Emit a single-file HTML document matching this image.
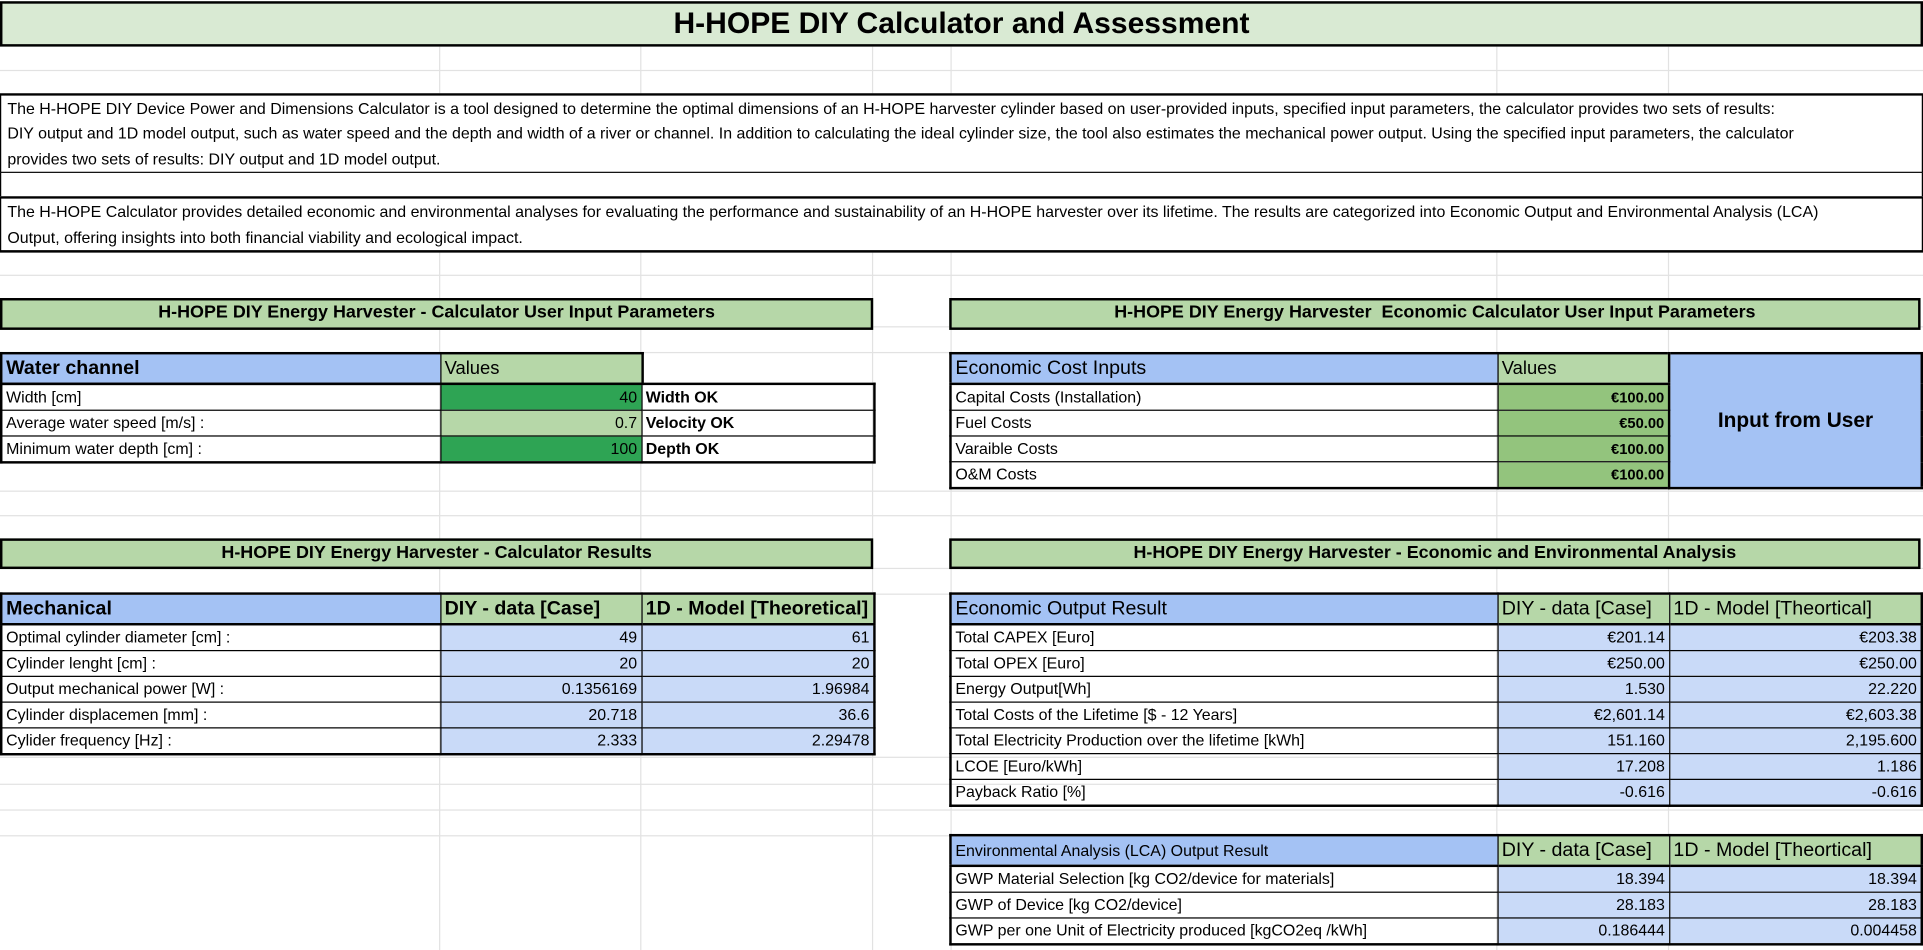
<!DOCTYPE html>
<html><head><meta charset="utf-8"><style>
html,body{margin:0;padding:0;background:#fff;overflow:hidden}
body{width:1923px;height:950px;position:relative}
#w{position:absolute;left:0;top:0;width:1568px;height:775px;transform:scale(1.2264);transform-origin:0 0;font-family:"Liberation Sans",Arial,sans-serif;color:#000}
.a{position:absolute;box-sizing:border-box}
.vl{position:absolute;top:38px;bottom:0;width:1px;background:#e2e2e2}
.hl{position:absolute;left:0;right:0;height:1px;background:#e2e2e2}
.hdr{background:#b6d7a8;border:2.5px solid #000;font-weight:bold;font-size:14.6px;text-align:center;line-height:20px}
table{position:absolute;border-collapse:collapse;font-size:13px;table-layout:fixed}
td{border:1px solid #000;padding:0 3px;white-space:nowrap;overflow:hidden;height:20px;line-height:18px}
.t{border:2.5px solid #000}
tr.h td{font-size:16px;height:23px;border-bottom:2.5px solid #000}
.b{background:#a4c2f4}.g{background:#b6d7a8}.lb{background:#c9daf8}.dg{background:#2ea454}.mg{background:#93c47d}
.r{text-align:right}
.bd{font-weight:bold}
.vb{border-left:2px solid #000}
</style></head><body><div id="w">
<div class="vl" style="left:358px"></div><div class="vl" style="left:522px"></div><div class="vl" style="left:711px"></div><div class="vl" style="left:775px"></div><div class="vl" style="left:1220px"></div><div class="vl" style="left:1360px"></div>
<div class="hl" style="top:57px"></div><div class="hl" style="top:224px"></div><div class="hl" style="top:266px"></div><div class="hl" style="top:287px"></div><div class="hl" style="top:400px"></div><div class="hl" style="top:420px"></div><div class="hl" style="top:463px"></div><div class="hl" style="top:484px"></div><div class="hl" style="top:617px"></div><div class="hl" style="top:639px"></div><div class="hl" style="top:660px"></div><div class="hl" style="top:681px"></div>

<div class="a" style="left:0;top:1px;width:1568px;height:37px;background:#d9ead3;border:2.5px solid #000;font-weight:bold;font-size:24.5px;text-align:center;line-height:33px">H-HOPE DIY Calculator and Assessment</div>

<div class="a" style="left:0;top:76px;width:1568px;height:66px;background:#fff;border-top:2.5px solid #000;border-bottom:2.5px solid #000;border-left:1px solid #000;border-right:1px solid #000;font-size:13px;line-height:20.3px;padding:1px 5px">The H-HOPE DIY Device Power and Dimensions Calculator is a tool designed to determine the optimal dimensions of an H-HOPE harvester cylinder based on user-provided inputs, specified input parameters, the calculator provides two sets of results:<br>DIY output and 1D model output, such as water speed and the depth and width of a river or channel. In addition to calculating the ideal cylinder size, the tool also estimates the mechanical power output. Using the specified input parameters, the calculator<br>provides two sets of results: DIY output and 1D model output.</div>
<div class="a" style="left:0;top:141px;width:1568px;height:21px;border-left:1px solid #000;border-right:1px solid #000;background:#fff"></div>
<div class="a" style="left:0;top:160px;width:1568px;height:46px;background:#fff;border-top:2.5px solid #000;border-bottom:2.5px solid #000;border-left:1px solid #000;border-right:1px solid #000;font-size:13px;line-height:20.5px;padding:1px 5px">The H-HOPE Calculator provides detailed economic and environmental analyses for evaluating the performance and sustainability of an H-HOPE harvester over its lifetime. The results are categorized into Economic Output and Environmental Analysis (LCA)<br>Output, offering insights into both financial viability and ecological impact.</div>

<div class="a hdr" style="left:0;top:243px;width:712px;height:26px">H-HOPE DIY Energy Harvester - Calculator User Input Parameters</div>
<div class="a hdr" style="left:774px;top:243px;width:792px;height:26px">H-HOPE DIY Energy Harvester&nbsp; Economic Calculator User Input Parameters</div>
<div class="a hdr" style="left:0;top:439px;width:712px;height:25px">H-HOPE DIY Energy Harvester - Calculator Results</div>
<div class="a hdr" style="left:774px;top:439px;width:792px;height:25px">H-HOPE DIY Energy Harvester - Economic and Environmental Analysis</div>

<table style="left:0;top:287px;width:523px" class="t"><colgroup><col style="width:358px"><col style="width:165px"></colgroup>
<tr class="h"><td class="b bd">Water channel</td><td class="g" style="font-size:15px">Values</td></tr></table>
<table style="left:0;top:312px;width:712px" class="t"><colgroup><col style="width:358px"><col style="width:164px"><col style="width:190px"></colgroup>
<tr><td>Width [cm]</td><td class="dg r">40</td><td class="bd">Width OK</td></tr>
<tr><td>Average water speed [m/s] :</td><td class="g r">0.7</td><td class="bd">Velocity OK</td></tr>
<tr><td>Minimum water depth [cm] :</td><td class="dg r">100</td><td class="bd">Depth OK</td></tr></table>

<table style="left:0;top:483px;width:712px" class="t"><colgroup><col style="width:358px"><col style="width:164px"><col style="width:190px"></colgroup>
<tr class="h"><td class="b bd">Mechanical</td><td class="g bd">DIY - data [Case]</td><td class="g bd">1D - Model [Theoretical]</td></tr>
<tr><td>Optimal cylinder diameter [cm] :</td><td class="lb r">49</td><td class="lb r">61</td></tr>
<tr><td>Cylinder lenght [cm] :</td><td class="lb r">20</td><td class="lb r">20</td></tr>
<tr><td>Output mechanical power [W] :</td><td class="lb r">0.1356169</td><td class="lb r">1.96984</td></tr>
<tr><td>Cylinder displacemen [mm] :</td><td class="lb r">20.718</td><td class="lb r">36.6</td></tr>
<tr><td>Cylider frequency [Hz] :</td><td class="lb r">2.333</td><td class="lb r">2.29478</td></tr></table>

<table style="left:774px;top:287px;width:792px" class="t"><colgroup><col style="width:446px"><col style="width:140px"><col style="width:206px"></colgroup>
<tr class="h"><td class="b">Economic Cost Inputs</td><td class="g" style="font-size:15px">Values</td><td class="b bd vb" rowspan="5" style="text-align:center;font-size:17px;border-bottom:2.5px solid #000">Input from User</td></tr>
<tr><td>Capital Costs (Installation)</td><td class="mg r bd" style="font-size:12px">€100.00</td></tr>
<tr><td>Fuel Costs</td><td class="mg r bd" style="font-size:12px">€50.00</td></tr>
<tr><td>Varaible Costs</td><td class="mg r bd" style="font-size:12px">€100.00</td></tr>
<tr><td>O&amp;M Costs</td><td class="mg r bd" style="font-size:12px">€100.00</td></tr></table>

<table style="left:774px;top:483px;width:792px" class="t"><colgroup><col style="width:446px"><col style="width:140px"><col style="width:206px"></colgroup>
<tr class="h"><td class="b">Economic Output Result</td><td class="g">DIY - data [Case]</td><td class="g">1D - Model [Theortical]</td></tr>
<tr><td>Total CAPEX [Euro]</td><td class="lb r">€201.14</td><td class="lb r">€203.38</td></tr>
<tr><td>Total OPEX [Euro]</td><td class="lb r">€250.00</td><td class="lb r">€250.00</td></tr>
<tr><td>Energy Output[Wh]</td><td class="lb r">1.530</td><td class="lb r">22.220</td></tr>
<tr><td>Total Costs of the Lifetime [$ - 12 Years]</td><td class="lb r">€2,601.14</td><td class="lb r">€2,603.38</td></tr>
<tr><td>Total Electricity Production over the lifetime [kWh]</td><td class="lb r">151.160</td><td class="lb r">2,195.600</td></tr>
<tr><td>LCOE [Euro/kWh]</td><td class="lb r">17.208</td><td class="lb r">1.186</td></tr>
<tr><td>Payback Ratio [%]</td><td class="lb r">-0.616</td><td class="lb r">-0.616</td></tr></table>

<table style="left:774px;top:680px;width:792px" class="t"><colgroup><col style="width:446px"><col style="width:140px"><col style="width:206px"></colgroup>
<tr class="h"><td class="b" style="font-size:13px">Environmental Analysis (LCA) Output Result</td><td class="g">DIY - data [Case]</td><td class="g">1D - Model [Theortical]</td></tr>
<tr><td>GWP Material Selection [kg CO2/device for materials]</td><td class="lb r">18.394</td><td class="lb r">18.394</td></tr>
<tr><td>GWP of Device [kg CO2/device]</td><td class="lb r">28.183</td><td class="lb r">28.183</td></tr>
<tr><td>GWP per one Unit of Electricity produced [kgCO2eq /kWh]</td><td class="lb r">0.186444</td><td class="lb r">0.004458</td></tr></table>
</div></body></html>
